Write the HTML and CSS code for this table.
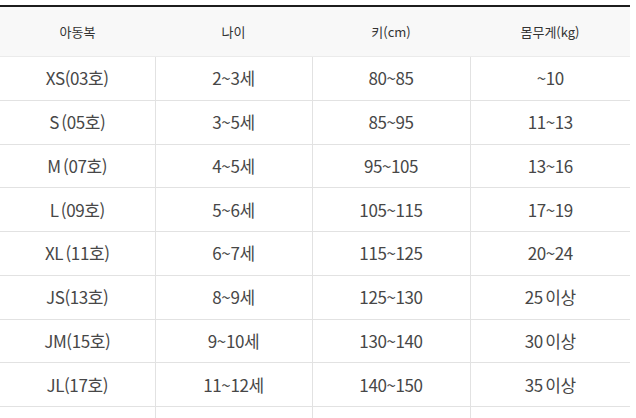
FILE: index.html
```html
<!DOCTYPE html>
<html lang="ko">
<head>
<meta charset="utf-8">
<link rel="stylesheet" href="styles.css">
</head>
<body>
<table class="size-table">
  <colgroup>
    <col class="c1"><col class="c2"><col class="c3"><col class="c4">
  </colgroup>
  <thead>
    <tr><th>아동복</th><th>나이</th><th>키(cm)</th><th>몸무게(kg)</th></tr>
  </thead>
  <tbody>
    <tr><td>XS(03호)</td><td>2~3세</td><td>80~85</td><td>~10</td></tr>
    <tr><td>S (05호)</td><td>3~5세</td><td>85~95</td><td>11~13</td></tr>
    <tr><td>M (07호)</td><td>4~5세</td><td>95~105</td><td>13~16</td></tr>
    <tr><td>L (09호)</td><td>5~6세</td><td>105~115</td><td>17~19</td></tr>
    <tr><td>XL (11호)</td><td>6~7세</td><td>115~125</td><td>20~24</td></tr>
    <tr><td>JS(13호)</td><td>8~9세</td><td>125~130</td><td>25 이상</td></tr>
    <tr><td>JM(15호)</td><td>9~10세</td><td>130~140</td><td>30 이상</td></tr>
    <tr><td>JL(17호)</td><td>11~12세</td><td>140~150</td><td>35 이상</td></tr>
    <tr><td>&nbsp;</td><td>&nbsp;</td><td>&nbsp;</td><td>&nbsp;</td></tr>
  </tbody>
</table>
</body>
</html>
```
FILE: styles.css
```css
html, body {
  margin: 0;
  padding: 0;
  background: #ffffff;
  overflow: hidden;
}
body {
  padding-top: 5px;
  font-family: "Noto Sans CJK KR", "Noto Sans", sans-serif;
}
.size-table {
  width: 630px;
  border-collapse: collapse;
  table-layout: fixed;
  border-top: 2px solid #1c1c1c;
}
.c1 { width: 155px; }
.c2 { width: 157px; }
.c3 { width: 158px; }
.c4 { width: 160px; }
.size-table th {
  height: 49px;
  padding: 0;
  background: #f8f8f8;
  color: #333333;
  font-weight: 400;
  font-size: 13px;
  line-height: 18px;
  text-align: center;
  border-bottom: 1px solid #ebebeb;
}
.size-table td {
  height: 42.75px;
  padding: 0;
  text-align: center;
  color: #474747;
  font-size: 17px;
  line-height: 22px;
  letter-spacing: -0.4px;
  word-spacing: -2px;
  border-bottom: 1px solid #e2e2e2;
  border-right: 1px solid #e2e2e2;
}
.size-table td:last-child {
  border-right: none;
}
```
